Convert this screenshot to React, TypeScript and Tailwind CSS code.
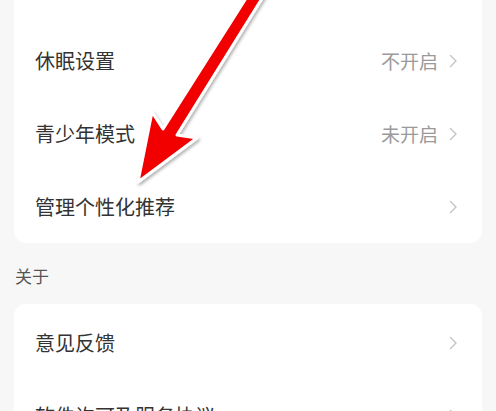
import React from "react";

const Chevron = () => (
  <svg width="9" height="14" viewBox="0 0 9 14" className="ml-[11px] shrink-0">
    <path d="M1.5 1.5 L7 7 L1.5 12.5" fill="none" stroke="#c4c4c4" strokeWidth="1.4" strokeLinecap="round" strokeLinejoin="round" />
  </svg>
);

const Row = ({ label, value }: { label: string; value?: string }) => (
  <div className="h-[73px] flex items-center pl-[21px] pr-[24px]">
    <span className="flex-1 text-[20px] leading-none text-[#333333]">{label}</span>
    {value && <span className="text-[19px] leading-none text-[#9a9a9a]">{value}</span>}
    <Chevron />
  </div>
);

export default function App() {
  return (
    <div
      className="relative w-[496px] h-[411px] overflow-hidden bg-[#f7f7f7]"
      style={{ fontFamily: '"Noto Sans CJK SC", "Noto Sans", sans-serif' }}
    >
      <div className="mx-[14px] -mt-[12px] pt-[36px] bg-white rounded-[12px]">
        <Row label="休眠设置" value="不开启" />
        <Row label="青少年模式" value="未开启" />
        <Row label="管理个性化推荐" />
      </div>
      <div className="h-[61px] flex items-center pl-[15px] pt-[3px]">
        <span className="text-[17px] leading-none text-[#555555]">关于</span>
      </div>
      <div className="mx-[14px] pt-[2px] bg-white rounded-[12px]">
        <Row label="意见反馈" />
        <Row label="软件许可及服务协议" />
      </div>

      <svg
        className="absolute left-0 top-0 pointer-events-none"
        width="496"
        height="411"
        viewBox="0 0 496 411"
      >
        <defs>
          <filter id="sh" x="-20%" y="-20%" width="140%" height="140%">
            <feDropShadow dx="1.5" dy="2" stdDeviation="1.6" floodColor="#000" floodOpacity="0.3" />
          </filter>
        </defs>
        <polygon
          points="138,182 152,112 163,129 250,-8 266,-8 177,135 197,138"
          fill="#f20000"
          stroke="#ffffff"
          strokeWidth="3"
          strokeLinejoin="round"
          filter="url(#sh)"
        />
      </svg>
    </div>
  );
}
